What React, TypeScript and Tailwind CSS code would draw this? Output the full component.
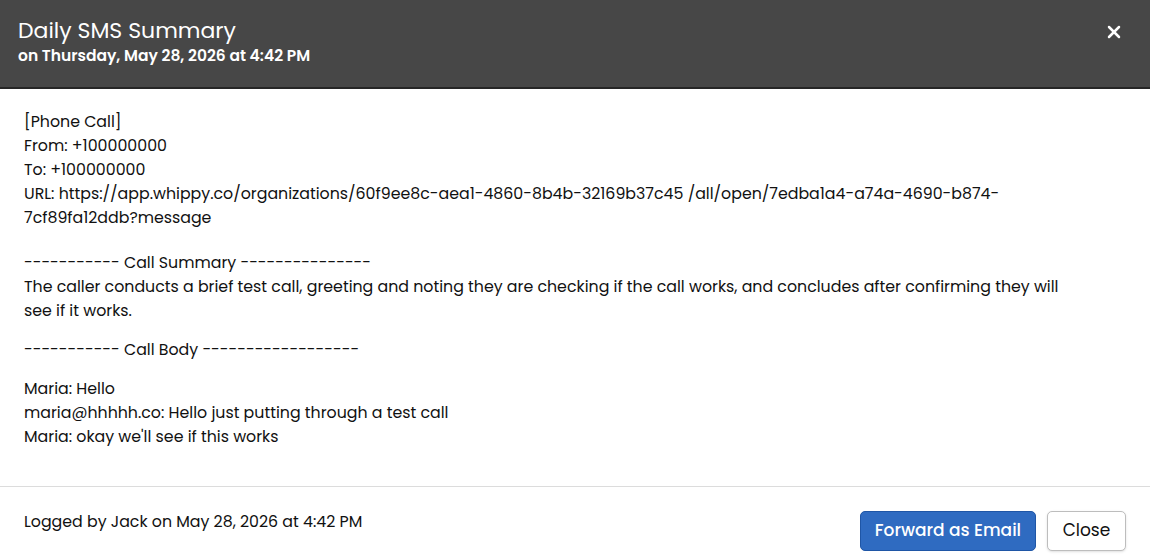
import { X } from "lucide-react";

const font = { fontFamily: '"Poppins", "Open Sans", "Liberation Sans", sans-serif' };

export default function App() {
  return (
    <div className="flex h-[560px] w-[1150px] flex-col bg-white text-[#111]" style={font}>
      <header className="flex h-[89px] items-start justify-between border-b-2 border-[#262626] bg-[#474747] pl-[18px] pr-[26px] pt-[16px] text-white">
        <div>
          <h1 className="text-[22px] leading-[30px] font-normal">Daily SMS Summary</h1>
          <p className="text-[15.5px] leading-[20px] font-semibold">on Thursday, May 28, 2026 at 4:42 PM</p>
        </div>
        <button className="mt-[6px] text-white">
          <X size={20} strokeWidth={3} />
        </button>
      </header>

      <main className="flex-1 px-6 pt-[21px] text-[15.8px] leading-6">
        <p>[Phone Call]</p>
        <p>From: +100000000</p>
        <p>To: +100000000</p>
        <p>
          URL: https://app.whippy.co/organizations/60f9ee8c-aea1-4860-8b4b-32169b37c45 /all/open/7edba1a4-a74a-4690-b874-
          <br />
          7cf89fa12ddb?message
        </p>
        <p className="mt-[21px]">----------- Call Summary ---------------</p>
        <p>
          The caller conducts a brief test call, greeting and noting they are checking if the call works, and concludes after confirming they will
          <br />
          see if it works.
        </p>
        <p className="mt-[15px]">----------- Call Body ------------------</p>
        <p className="mt-[15px]">Maria: Hello</p>
        <p>maria@hhhhh.co: Hello just putting through a test call</p>
        <p>Maria: okay we'll see if this works</p>
      </main>

      <footer className="flex h-[74px] items-start justify-between border-t border-[#dcdcdc] pl-6 pr-6 pt-[23px]">
        <p className="text-[15.8px] leading-6">Logged by Jack on May 28, 2026 at 4:42 PM</p>
        <div className="mt-[1px] flex gap-[11px]">
          <button className="h-10 w-[176px] rounded-[5px] border border-[#1f56a6] bg-[#2f6bc1] text-[17px] font-medium text-white">
            Forward as Email
          </button>
          <button className="h-10 w-[79px] rounded-[5px] border border-[#bdbdbd] bg-white text-[17px] text-[#111] shadow-sm">
            Close
          </button>
        </div>
      </footer>
    </div>
  );
}
